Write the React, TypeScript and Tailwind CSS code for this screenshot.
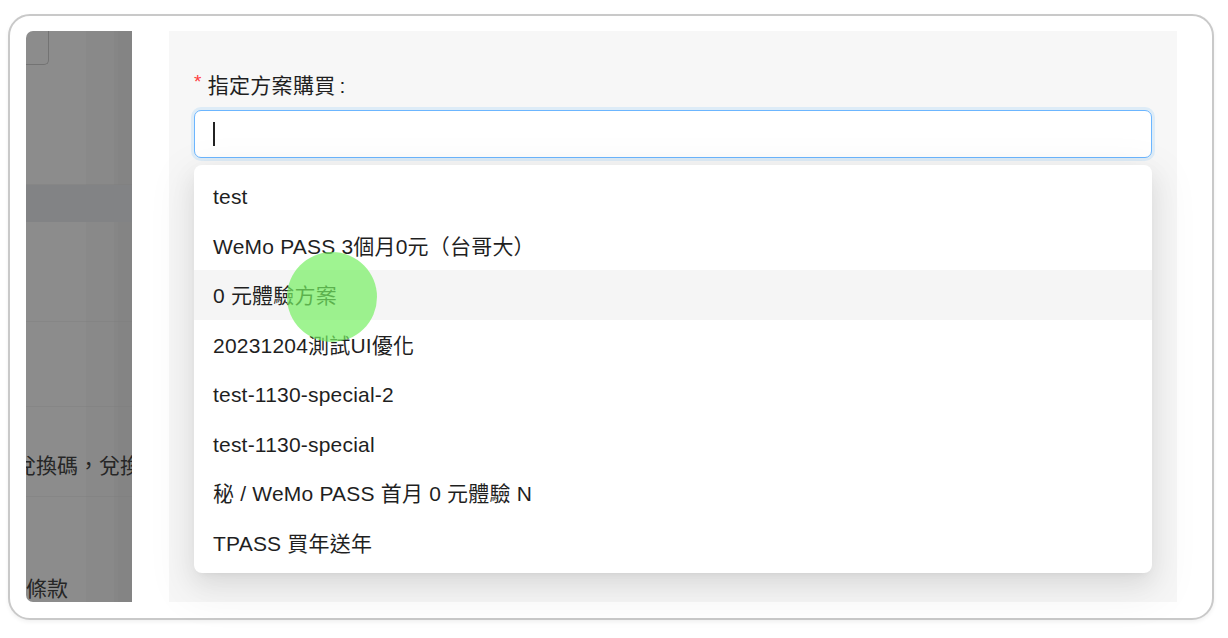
const font = "font-['Liberation_Sans','Noto_Sans_CJK_TC',sans-serif]";

const options = [
  "test",
  "WeMo PASS 3個月0元（台哥大）",
  "0 元體驗方案",
  "20231204測試UI優化",
  "test-1130-special-2",
  "test-1130-special",
  "秘 / WeMo PASS 首月 0 元體驗 N",
  "TPASS 買年送年",
];

function MaskedSidebar() {
  return (
    <div className="relative w-[106px] h-[571px] shrink-0 overflow-hidden rounded-l-[7px] bg-[linear-gradient(to_right,#8c8c8c_0,#8c8c8c_60px,#898989_60px,#898989_88px,#868686_88px,#868686_92px,#848484_92px)] flex flex-col">
      {/* top row with a faint box in the corner */}
      <div className="h-[154px] border-b border-[#7e7e7e]/40">
        <div className="w-[23px] h-[34px] rounded-br-[5px] border-r border-b border-[#737373]" />
      </div>
      <div className="h-[37px] bg-[#828385]" />
      <div className="h-[100px] border-b border-[#7e7e7e]/40" />
      <div className="h-[85px] border-b border-[#7e7e7e]/40" />
      <div className="h-[90px] border-b border-[#7e7e7e]/40 flex items-end pb-[15px]">
        <span className="-ml-[11px] whitespace-nowrap text-[21px] leading-[30px] text-[#262626]">
          兌換碼，兌換
        </span>
      </div>
      <div className="flex-1 flex items-end -mb-[2px]">
        <span className="whitespace-nowrap text-[21px] leading-[30px] text-[#262626]">
          條款
        </span>
      </div>
    </div>
  );
}

function PlanSelect() {
  return (
    <div className="relative w-[1008px] h-[571px] shrink-0 bg-[#f7f7f7] pl-[25px] pt-[40px]">
      <div className="flex items-center h-[30px] text-[21px] tracking-[0.3px] text-[#1f1f1f]">
        <span className="text-[#ff3b3e] text-[19px] mr-[6px] -mt-[7px]">*</span>
        <span>指定方案購買</span>
        <span className="ml-[4px]">:</span>
      </div>

      <div className="mt-[9px] w-[958px] h-[48px] rounded-[7px] bg-white border-[1.5px] border-[#6cb6ff] shadow-[0_0_0_3px_rgba(5,145,255,0.1)] flex items-center pl-[18px]">
        <div className="w-[2px] h-[24px] bg-[#222]" />
      </div>

      {/* dropdown */}
      <div className="absolute left-[25px] top-[134px] w-[958px] rounded-[8px] bg-white py-[6px] shadow-[0_9px_24px_0_rgba(0,0,0,0.08),0_4px_9px_-6px_rgba(0,0,0,0.12),0_14px_42px_12px_rgba(0,0,0,0.05)]">
        {options.map((o, i) => (
          <div
            key={o}
            className={
              "h-[49.5px] flex items-center px-[19px] text-[21px] tracking-[0.2px] text-[#1f1f1f] whitespace-nowrap " +
              (i === 2 ? "bg-[#f5f5f5]" : "")
            }
          >
            <span className="mt-[2px]">{o}</span>
          </div>
        ))}
        {/* touch indicator */}
        <div className="absolute left-[93px] top-[87px] w-[90px] h-[90px] rounded-full bg-[rgba(118,240,98,0.7)]" />
      </div>
    </div>
  );
}

export default function App() {
  return (
    <div className={"w-[1228px] h-[638px] bg-white pt-[14px] pl-[8px] " + font}>
      <div className="w-[1206px] h-[606px] rounded-[22px] border-2 border-[#c9c9c9] bg-white pt-[15px] pl-[16px] shadow-[0_2px_4px_rgba(0,0,0,0.06)]">
        <div className="flex gap-[37px]">
          <MaskedSidebar />
          <PlanSelect />
        </div>
      </div>
    </div>
  );
}
